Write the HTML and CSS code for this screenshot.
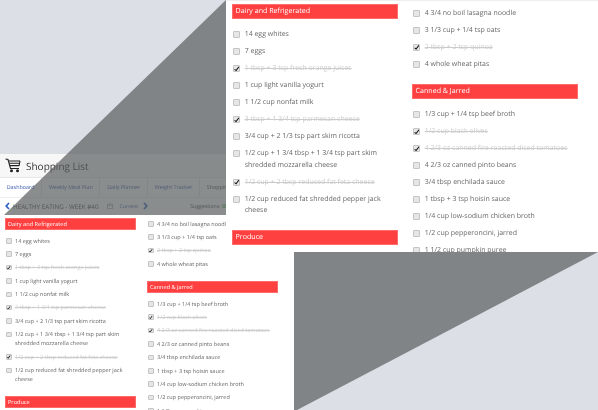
FILE: index.html
```html
<!DOCTYPE html>
<html lang="en">
<head>
    <meta charset="UTF-8">
    <title>Shopping List</title>
    <link rel="stylesheet" href="styles.css">
</head>
<body>
<div class="canvas">
    <section class="shot">
        <header class="head">
            <svg class="cart" viewBox="0 0 16 15" width="16" height="15">
                <path d="M0.5 1 L3 1.5 L5.5 10.5 L14 10.5" fill="none" stroke="#222" stroke-width="1.1"/>
                <path d="M3.6 3 H15 M4.2 5.2 H14.4 M4.8 7.6 H14" fill="none" stroke="#222" stroke-width="1.1"/>
                <path d="M15 3 L14 8" fill="none" stroke="#222" stroke-width="1.1"/>
                <circle cx="6.5" cy="12.8" r="1.5" fill="#222"/>
                <circle cx="12.5" cy="12.8" r="1.5" fill="#222"/>
            </svg>
            <h1>Shopping List</h1>
        </header>
        <nav class="tabs">
            <a>Dashboard</a>
            <a>Weekly Meal Plan</a>
            <a>Daily Planner</a>
            <a>Weight Tracker</a>
            <a class="active">Shopping List</a>
        </nav>
        <div class="bar">
            <svg class="chev" viewBox="0 0 5 8" width="5" height="8"><path d="M4 1 L1.2 4 L4 7" fill="none" stroke="#2a62c4" stroke-width="1.7"/></svg>
            <span class="week">HEALTHY EATING - WEEK #40</span>
            <svg class="cal" viewBox="0 0 6 6" width="6" height="6"><path d="M.5 1 H5.5 V5.5 H.5 Z M.5 2.4 H5.5" fill="none" stroke="#999" stroke-width=".7"/></svg>
            <span class="current">Current</span>
            <svg class="chev" viewBox="0 0 5 8" width="5" height="8"><path d="M1 1 L3.8 4 L1 7" fill="none" stroke="#2a62c4" stroke-width="1.7"/></svg>
            <span class="sugg">Suggestions: <b>ON</b></span>
        </div>
        <div class="lists small">
            <div class="col">
                <h2>Dairy and Refrigerated</h2>
                <ul>
                    <li><input type="checkbox">14 egg whites</li>
                    <li><input type="checkbox">7 eggs</li>
                    <li class="done"><input type="checkbox" checked><span>1 tbsp + 3 tsp fresh orange juices</span></li>
                    <li><input type="checkbox">1 cup light vanilla yogurt</li>
                    <li><input type="checkbox">1 1/2 cup nonfat milk</li>
                    <li class="done"><input type="checkbox" checked><span>3 tbsp + 1 3/4 tsp parmesan cheese</span></li>
                    <li><input type="checkbox">3/4 cup + 2 1/3 tsp part skim ricotta</li>
                    <li><input type="checkbox">1/2 cup + 1 3/4 tbsp + 1 3/4 tsp part skim shredded mozzarella cheese</li>
                    <li class="done"><input type="checkbox" checked><span>1/2 cup + 2 tbsp reduced fat feta cheese</span></li>
                    <li><input type="checkbox">1/2 cup reduced fat shredded pepper jack cheese</li>
                </ul>
                <h2>Produce</h2>
            </div>
            <div class="col right">
                <ul>
                    <li><input type="checkbox">4 3/4 no boil lasagna noodle</li>
                    <li><input type="checkbox">3 1/3 cup + 1/4 tsp oats</li>
                    <li class="done"><input type="checkbox" checked><span>2 tbsp + 2 tsp quinoa</span></li>
                    <li><input type="checkbox">4 whole wheat pitas</li>
                </ul>
                <h2>Canned &amp; Jarred</h2>
                <ul>
                    <li><input type="checkbox">1/3 cup + 1/4 tsp beef broth</li>
                    <li class="done"><input type="checkbox" checked><span>1/2 cup black olives</span></li>
                    <li class="done"><input type="checkbox" checked><span>4 2/3 oz canned fire roasted diced tomatoes</span></li>
                    <li><input type="checkbox">4 2/3 oz canned pinto beans</li>
                    <li><input type="checkbox">3/4 tbsp enchilada sauce</li>
                    <li><input type="checkbox">1 tbsp + 3 tsp hoisin sauce</li>
                    <li><input type="checkbox">1/4 cup low-sodium chicken broth</li>
                    <li><input type="checkbox">1/2 cup pepperoncini, jarred</li>
                    <li><input type="checkbox">1 1/2 cup pumpkin puree</li>
                </ul>
            </div>
        </div>
    </section>

    <div class="fold-top"></div>
    <div class="fold-bottom"></div>

    <section class="zoom">
        <div class="lists large">
            <div class="col">
                <h2>Dairy and Refrigerated</h2>
                <ul>
                    <li><input type="checkbox">14 egg whites</li>
                    <li><input type="checkbox">7 eggs</li>
                    <li class="done"><input type="checkbox" checked><span>1 tbsp + 3 tsp fresh orange juices</span></li>
                    <li><input type="checkbox">1 cup light vanilla yogurt</li>
                    <li><input type="checkbox">1 1/2 cup nonfat milk</li>
                    <li class="done"><input type="checkbox" checked><span>3 tbsp + 1 3/4 tsp parmesan cheese</span></li>
                    <li><input type="checkbox">3/4 cup + 2 1/3 tsp part skim ricotta</li>
                    <li><input type="checkbox">1/2 cup + 1 3/4 tbsp + 1 3/4 tsp part skim shredded mozzarella cheese</li>
                    <li class="done"><input type="checkbox" checked><span>1/2 cup + 2 tbsp reduced fat feta cheese</span></li>
                    <li><input type="checkbox">1/2 cup reduced fat shredded pepper jack cheese</li>
                </ul>
                <h2>Produce</h2>
            </div>
            <div class="col right">
                <ul>
                    <li><input type="checkbox">4 3/4 no boil lasagna noodle</li>
                    <li><input type="checkbox">3 1/3 cup + 1/4 tsp oats</li>
                    <li class="done"><input type="checkbox" checked><span>2 tbsp + 2 tsp quinoa</span></li>
                    <li><input type="checkbox">4 whole wheat pitas</li>
                </ul>
                <h2>Canned &amp; Jarred</h2>
                <ul>
                    <li><input type="checkbox">1/3 cup + 1/4 tsp beef broth</li>
                    <li class="done"><input type="checkbox" checked><span>1/2 cup black olives</span></li>
                    <li class="done"><input type="checkbox" checked><span>4 2/3 oz canned fire roasted diced tomatoes</span></li>
                    <li><input type="checkbox">4 2/3 oz canned pinto beans</li>
                    <li><input type="checkbox">3/4 tbsp enchilada sauce</li>
                    <li><input type="checkbox">1 tbsp + 3 tsp hoisin sauce</li>
                    <li><input type="checkbox">1/4 cup low-sodium chicken broth</li>
                    <li><input type="checkbox">1/2 cup pepperoncini, jarred</li>
                    <li><input type="checkbox">1 1/2 cup pumpkin puree</li>
                </ul>
            </div>
        </div>
    </section>
</div>
</body>
</html>
```

FILE: styles.css
```css
* {
    margin: 0;
    padding: 0;
    list-style: none;
    box-sizing: border-box;
}
html, body {
    height: 100%;
    overflow: hidden;
}
body {
    background: #dcdfe6;
    font-family: "Open Sans", "Liberation Sans", sans-serif;
    color: #666;
    text-rendering: geometricPrecision;
}
.canvas {
    position: relative;
    width: 598px;
    height: 410px;
    overflow: hidden;
    padding-top: 154px;
}

/* small screenshot */
.shot {
    width: 294px;
    height: 256px;
    background: #fff;
    overflow: hidden;
    filter: blur(.4px);
}
.head {
    display: flex;
    align-items: center;
    gap: 5px;
    height: 24px;
    padding-left: 5px;
    background: #f7f7f7;
    border-bottom: 1px solid #e6e6e6;
}
.head h1 {
    font-size: 10px;
    font-weight: 400;
    color: #333;
}
.tabs {
    display: flex;
    height: 20px;
    border-bottom: 1px solid #eee;
    font-size: 5.4px;
    line-height: 19px;
    color: #3a5cb0;
    white-space: nowrap;
}
.tabs a {
    padding: 0 6.7px;
    border-right: 1px solid #e8e8e8;
}
.tabs .active {
    color: #444;
    border-right: 0;
}
.bar {
    display: flex;
    align-items: center;
    height: 20px;
    padding: 0 0 4px 5px;
    font-size: 6.3px;
    white-space: nowrap;
}
.week {
    margin-left: 3px;
    color: #444;
}
.cal {
    margin-left: 8px;
}
.current {
    margin: 0 5px 0 7px;
    font-size: 5.2px;
    color: #3a5cb0;
}
.sugg {
    margin-left: 42px;
    font-size: 5.2px;
    color: #444;
}
.sugg b {
    color: #3c9a3c;
}

/* the same two lists, at two sizes: --u is one px of the small copy */
.lists {
    display: grid;
    grid-template-columns: calc(var(--u) * 131) calc(var(--u) * 131);
    column-gap: calc(var(--u) * 11);
}
.small {
    --u: 1px;
    padding-left: 5px;
}
.large {
    --u: 1.268px;
    padding: 3px 0 0 6px;
}
.large ul {
    padding-top: 2px;
    margin-bottom: -2px;
}
.lists h2 {
    height: calc(var(--u) * 12);
    margin-bottom: calc(var(--u) * 6.5);
    padding-left: calc(var(--u) * 2);
    background: #ff4040;
    border: 1px solid #ff6a6a;
    color: #fff;
    font-size: calc(var(--u) * 5.6);
    font-weight: 400;
    line-height: calc(var(--u) * 10);
}
.lists ul + h2 {
    margin-top: calc(var(--u) * 8);
}
.right {
    padding-top: calc(var(--u) * 1.5);
}
.lists li {
    position: relative;
    padding: 0 0 calc(var(--u) * 4.4) calc(var(--u) * 10);
    font-size: calc(var(--u) * 5.5);
    line-height: calc(var(--u) * 9);
}
.lists input {
    appearance: none;
    position: absolute;
    left: calc(var(--u) * 1);
    top: calc(var(--u) * 1.5);
    width: calc(var(--u) * 5.5);
    height: calc(var(--u) * 5.5);
    background: #e6e6e6;
    border: 1px solid #c4c4c4;
    border-radius: 1px;
}
.lists input:checked::after {
    content: "";
    display: block;
    width: 100%;
    height: 100%;
    background: #111;
    clip-path: polygon(10% 55%, 35% 70%, 85% 5%, 100% 20%, 38% 100%, 0 68%);
}
.lists .done {
    color: #ccc;
    text-decoration: line-through;
}

/* grey folds */
.fold-top {
    position: absolute;
    left: 4px;
    top: 0;
    width: 222px;
    height: 215px;
    background: rgba(89, 93, 93, .7);
    clip-path: polygon(100% 0, 100% 100%, 0 100%);
}
.fold-bottom {
    position: absolute;
    left: 294px;
    top: 252px;
    width: 304px;
    height: 158px;
    background: #818486;
    clip-path: polygon(0 0, 100% 0, 1% 100%, 0 100%);
}

/* enlarged copy on top */
.zoom {
    position: absolute;
    left: 226px;
    top: 0;
    width: 372px;
    height: 252px;
    background: #fff;
    border-top: 1px solid #eee;
    overflow: hidden;
    filter: blur(.4px);
}
```
